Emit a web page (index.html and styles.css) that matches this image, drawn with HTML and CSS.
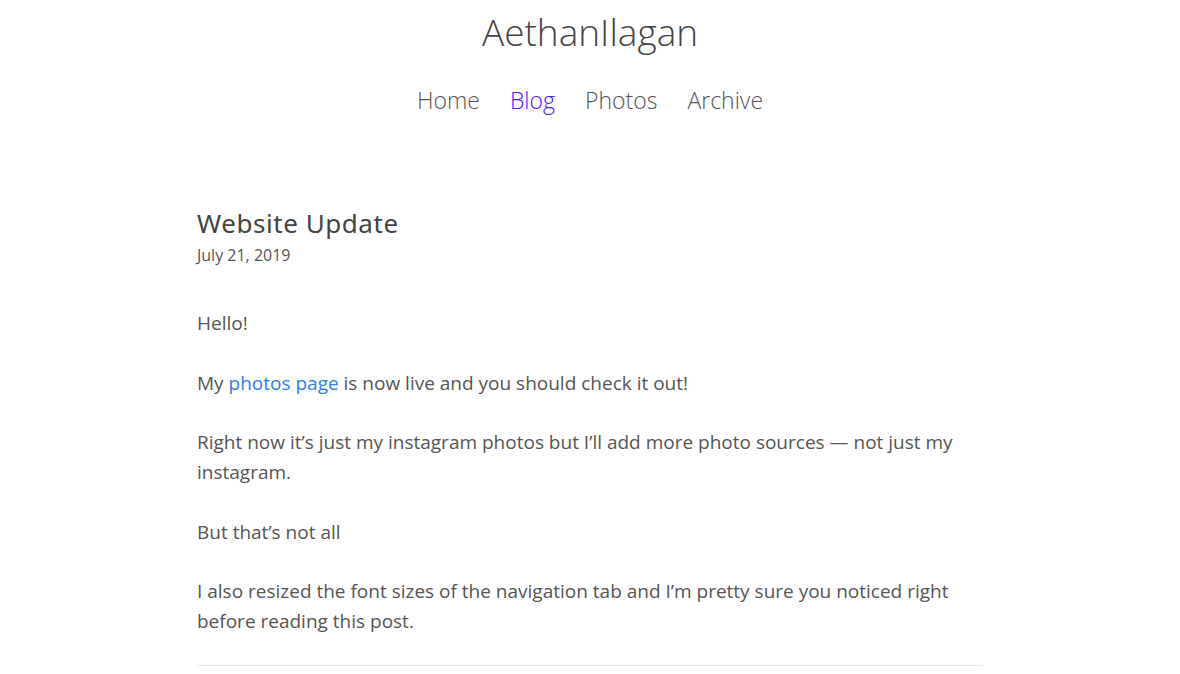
FILE: index.html
```html
<!DOCTYPE html>
<html lang="en">
<head>
<meta charset="utf-8">
<title>AethanIlagan</title>
<link rel="stylesheet" href="styles.css">
</head>
<body>
<header class="site-header">
  <h1 class="site-title">AethanIlagan</h1>
  <nav class="site-nav">
    <a class="nav-link" href="#">Home</a>
    <a class="nav-link active" href="#">Blog</a>
    <a class="nav-link" href="#">Photos</a>
    <a class="nav-link" href="#">Archive</a>
  </nav>
</header>
<main class="post">
  <h2 class="post-title">Website Update</h2>
  <div class="post-date">July 21, 2019</div>
  <div class="post-body">
    <p>Hello!</p>
    <p>My <a class="inline-link" href="#">photos page</a> is now live and you should check it out!</p>
    <p>Right now it’s just my instagram photos but I’ll add more photo sources — not just my instagram.</p>
    <p>But that’s not all</p>
    <p>I also resized the font sizes of the navigation tab and I’m pretty sure you noticed right before reading this post.</p>
  </div>
  <hr class="post-rule">
</main>
</body>
</html>
```

FILE: styles.css
```css
html, body {
  margin: 0;
  padding: 0;
  background: #fff;
}
body {
  font-family: "Open Sans", "Noto Sans", sans-serif;
  color: #555;
}
.site-header {
  display: flex;
  flex-direction: column;
  align-items: center;
  padding-top: 8px;
}
.site-title {
  margin: 0;
  font-family: "Open Sans", sans-serif;
  font-weight: 300;
  font-size: 37px;
  line-height: 48px;
  color: #444;
}
.site-nav {
  display: flex;
  gap: 30px;
  margin-top: 29px;
}
.nav-link {
  font-family: "Open Sans", sans-serif;
  font-weight: 300;
  font-size: 23px;
  line-height: 30px;
  color: #555;
  text-decoration: none;
}
.nav-link.active {
  color: #4a22f0;
}
.post {
  width: 786px;
  margin: 0 auto;
  padding-top: 91px;
}
.post-title {
  margin: 0;
  font-family: "Noto Sans", sans-serif;
  font-weight: 400;
  font-size: 26px;
  line-height: 34px;
  letter-spacing: 0.55px;
  color: #444;
}
.post-date {
  font-size: 16px;
  line-height: 20px;
  color: #555;
  margin-top: 5px;
}
.post-body {
  margin-top: 43px;
}
.post-body p {
  margin: 0 0 29.5px;
  font-size: 19px;
  line-height: 30px;
  color: #555;
}
.post-body p:last-child {
  margin-bottom: 29px;
}
.inline-link {
  color: #2f7de1;
  text-decoration: none;
}
.post-rule {
  border: 0;
  border-top: 1px solid #e8e8e8;
  margin: 0;
}
```
